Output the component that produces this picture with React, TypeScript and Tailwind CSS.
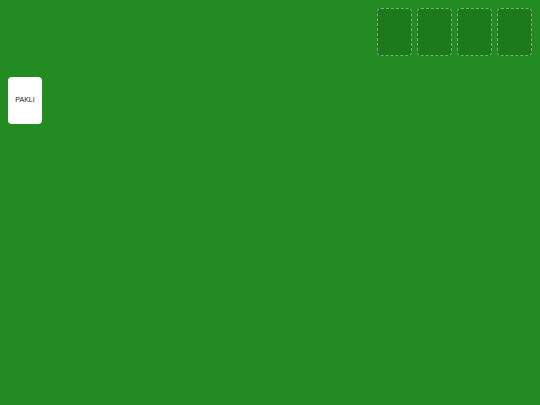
export default function App() {
  const slots = [0, 1, 2, 3]
  return (
    <div className="w-[540px] h-[405px] bg-[#228b22] p-2 flex flex-col gap-[21px]" style={{ fontFamily: '"Liberation Sans", Arial, sans-serif' }}>
      <div className="flex justify-end gap-[5px]">
        {slots.map((s) => (
          <div key={s} className="w-[35px] h-[48px] rounded-[4px] border border-dashed border-white/40 bg-[#1c7a1c]"></div>
        ))}
      </div>
      <div className="flex">
        <div className="w-[34px] h-[47px] rounded-[4px] bg-white flex items-center justify-center text-[7px] text-[#222]">
          PAKLI
        </div>
      </div>
    </div>
  )
}
